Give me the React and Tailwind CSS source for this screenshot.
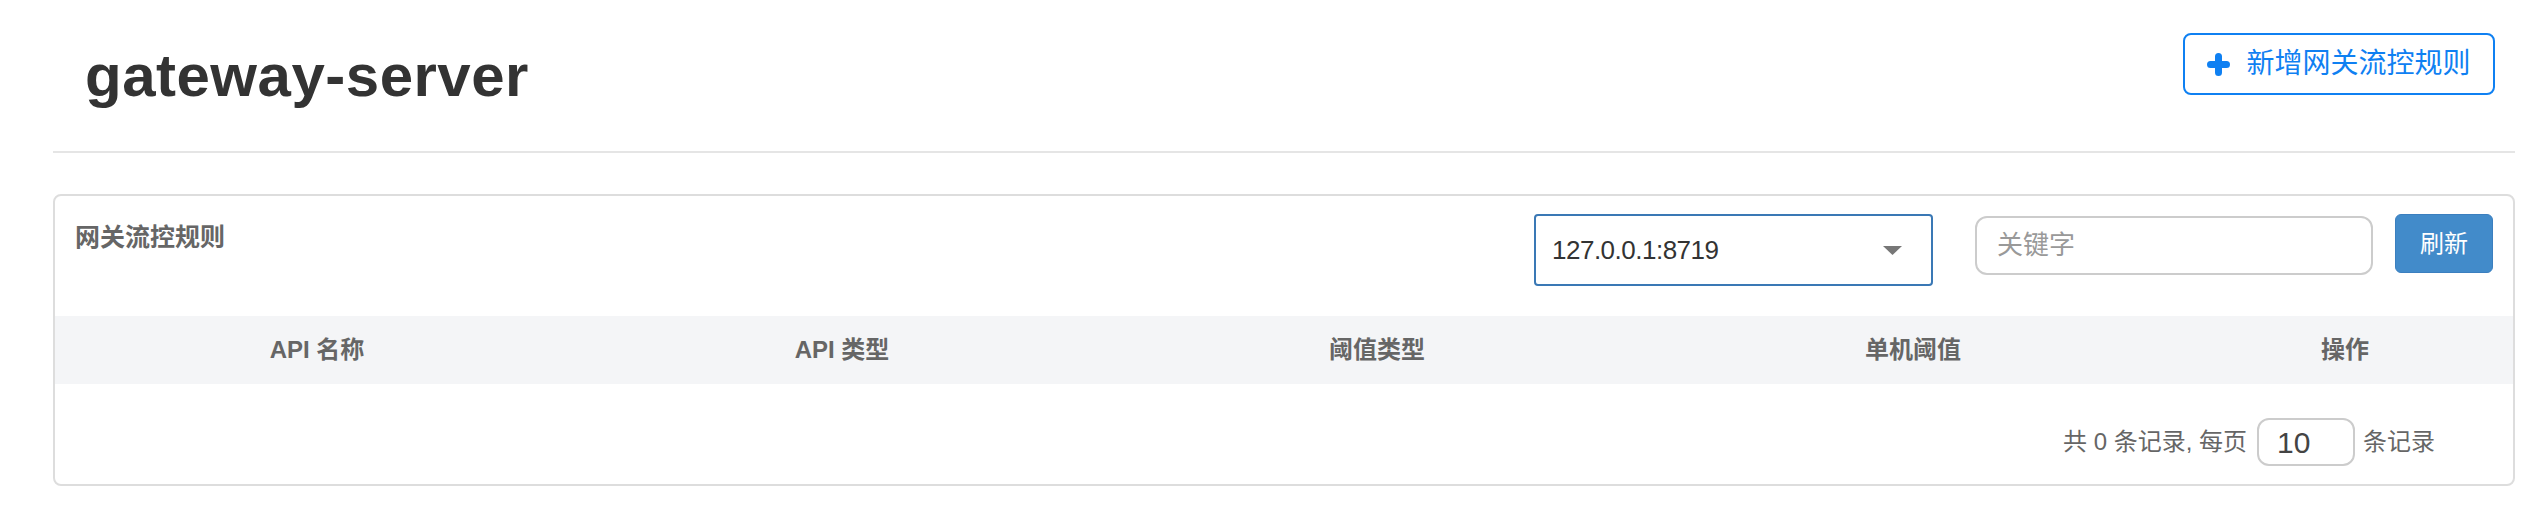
import React from "react";

const font = { fontFamily: '"Liberation Sans", "Noto Sans CJK SC", sans-serif' };

const columns = ["API 名称", "API 类型", "阈值类型", "单机阈值", "操作"];

const PlusIcon = () => (
  <svg width="23" height="23" viewBox="0 0 23 23" className="shrink-0">
    <path d="M11.5 3.5v16M3.5 11.5h16" stroke="#0f80f2" strokeWidth="7" strokeLinecap="round" />
  </svg>
);

const App = () => {
  return (
    <div className="w-[2540px] h-[506px] bg-white pl-[53px] pr-[25px] text-[#333]" style={font}>
      {/* Header */}
      <div className="flex justify-between items-start h-[153px] border-b-2 border-[#e5e5e5]">
        <h1 className="mt-[46px] pl-[32px] text-[60px] leading-[60px] font-bold text-[#333] tracking-[0.5px]">
          gateway-server
        </h1>
        <button className="mt-[33px] mr-[20px] w-[312px] h-[62px] flex items-center justify-center gap-[16px] border-2 border-[#0f80f2] rounded-[8px] text-[#0f80f2] text-[28px] leading-none">
          <PlusIcon />
          <span>新增网关流控规则</span>
        </button>
      </div>

      {/* Card */}
      <div className="mt-[41px] border-2 border-[#dddddd] rounded-[8px] overflow-hidden">
        <div className="flex items-start pt-[18px] pb-[30px] pl-[20px] pr-[20px]">
          <div className="mt-[7px] text-[25px] leading-[32px] font-bold text-[#666]">网关流控规则</div>
          <div className="ml-auto w-[399px] h-[72px] border-2 border-[#3a78b5] rounded-[4px] flex items-center pl-[16px] pr-[29px]">
            <span className="text-[26px] text-[#333] tracking-[-0.5px]">127.0.0.1:8719</span>
            <svg width="19" height="9" viewBox="0 0 19 9" className="ml-auto">
              <path d="M0 0h19L9.5 9z" fill="#777" />
            </svg>
          </div>
          <div className="ml-[42px] mt-[2px] w-[398px] h-[59px] border-2 border-[#cccccc] rounded-[12px] flex items-center pl-[20px]">
            <span className="text-[26px] text-[#999]">关键字</span>
          </div>
          <button className="ml-[22px] w-[98px] h-[59px] bg-[#428bca] border border-[#3b7fbf] rounded-[6px] text-white text-[24px] flex items-center justify-center">
            刷新
          </button>
        </div>

        {/* Table header */}
        <div className="grid grid-cols-[524px_526px_544px_528px_1fr] h-[68px] bg-[#f4f5f7] items-center">
          {columns.map((c) => (
            <div key={c} className="text-center text-[24px] font-bold text-[#666]">
              {c}
            </div>
          ))}
        </div>

        {/* Pagination */}
        <div className="flex items-center justify-end pt-[34px] pb-[18px] pr-[78px] text-[24px] text-[#666]">
          <span>共 0 条记录, 每页</span>
          <div className="ml-[10px] mr-[8px] w-[98px] h-[48px] border-2 border-[#cccccc] rounded-[12px] flex items-center pl-[18px]">
            <span className="text-[30px] text-[#444]">10</span>
          </div>
          <span>条记录</span>
        </div>
      </div>
    </div>
  );
};

export default App;
